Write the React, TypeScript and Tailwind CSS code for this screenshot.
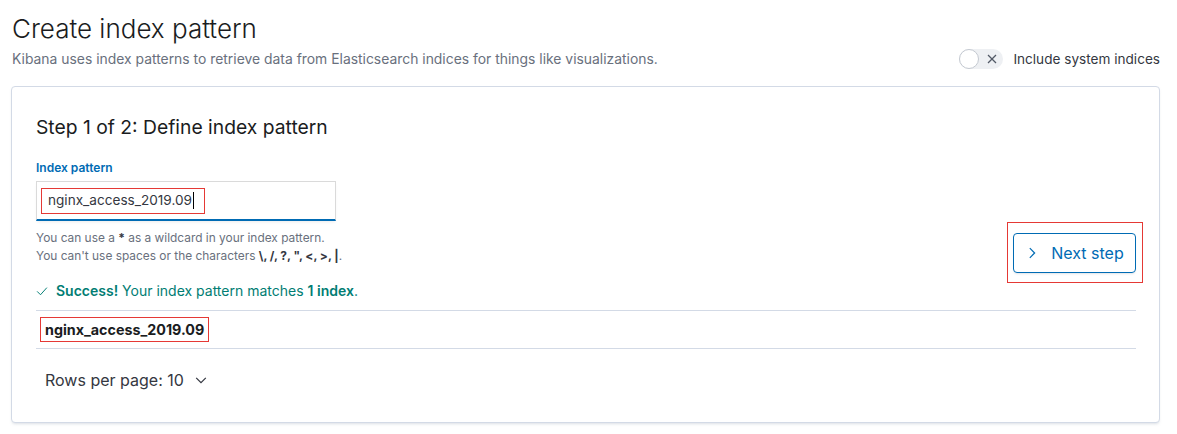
import React from 'react';

const font = { fontFamily: 'Inter, "Noto Sans", sans-serif' };

const CheckIcon = () => (
  <svg width="12" height="12" viewBox="0 0 16 16" fill="none" stroke="currentColor" strokeWidth="1.3">
    <polyline points="1.5,8.5 6,13 14.5,3.5" />
  </svg>
);

const ChevronRight = () => (
  <svg width="14" height="14" viewBox="0 0 16 16" fill="none" stroke="currentColor" strokeWidth="1.4">
    <polyline points="5.5,2.5 11,8 5.5,13.5" />
  </svg>
);

const ChevronDown = () => (
  <svg width="14" height="14" viewBox="0 0 16 16" fill="none" stroke="currentColor" strokeWidth="1.4">
    <polyline points="2.5,5.5 8,11 13.5,5.5" />
  </svg>
);

const App: React.FC = () => {
  return (
    <div style={font} className="bg-white w-[1177px] h-[434px] pl-[11px] pr-[17px] pt-[12px] text-[#343741]">
      {/* page header */}
      <div className="flex items-end justify-between">
        <div className="pl-[1px]">
          <h1 className="text-[26px] leading-[34px] font-light text-[#1a1c21]">Create index pattern</h1>
          <p className="mt-[3px] text-[13.9px] leading-[20px] text-[#69707d]">
            Kibana uses index patterns to retrieve data from Elasticsearch indices for things like visualizations.
          </p>
        </div>
        <div className="flex items-center">
          <div className="relative w-[44px] h-[20px] rounded-full bg-[#eef0f3] flex items-center">
            <div className="absolute left-0 top-0 w-[20px] h-[20px] rounded-full bg-white border border-[#c4c9d1]" />
            <svg className="absolute left-[27px] top-[4px]" width="12" height="12" viewBox="0 0 12 12" stroke="#535966" strokeWidth="1.3">
              <line x1="2" y1="2" x2="10" y2="10" />
              <line x1="10" y1="2" x2="2" y2="10" />
            </svg>
          </div>
          <span className="ml-[10px] text-[13.6px] leading-[20px] text-[#343741]">Include system indices</span>
        </div>
      </div>

      {/* panel */}
      <div className="mt-[17px] border border-[#d3dae6] rounded-[4px] bg-white shadow-[0_2px_3px_-1px_rgba(152,162,179,0.35)] pl-[24px] pr-[23px] pt-[28px] pb-[26px]">
        <h2 className="text-[19.3px] leading-[24px] font-normal text-[#1a1c21]">Step 1 of 2: Define index pattern</h2>

        <div className="mt-[21px] flex justify-between">
          <div>
            <label className="block text-[12px] leading-[16px] font-semibold text-[#006bb4]">Index pattern</label>
            <div className="mt-[5px] w-[300px] h-[40px] bg-white border border-[#dadada] border-b-2 border-b-[#006bb4] flex items-center pl-[4px] shadow-[0_2px_3px_-1px_rgba(0,0,0,0.08)]">
              <span className="inline-flex items-center h-[26px] border border-[#e53935] pl-[6px] pr-[10px] text-[13.6px] text-[#343741]">
                nginx_access_2019.09
                <span className="inline-block w-px h-[17px] bg-black ml-px" />
              </span>
            </div>
            <div className="mt-[8px] text-[11.9px] leading-[18px] text-[#69707d]">
              <p>
                You can use a <strong className="text-[#343741]">*</strong> as a wildcard in your index pattern.
              </p>
              <p>
                You can't use spaces or the characters <strong className="text-[#343741]">\, /, ?, ", &lt;, &gt;, |</strong>.
              </p>
            </div>
          </div>
          <div className="mt-[62px] -mr-[7px] h-[61px] border border-[#e53935] pl-[5px] pr-[6px] pt-[10px]">
            <button className="h-[40px] w-[123px] rounded-[4px] border border-[#006bb4] text-[#006bb4] flex items-center justify-center gap-[12px] text-[16px] shadow-[0_2px_2px_-1px_rgba(152,162,179,0.3)]">
              <ChevronRight />
              <span>Next step</span>
            </button>
          </div>
        </div>

        <div className="mt-[-2px] flex items-center gap-[8px] text-[14px] leading-[20px] text-[#017d73]">
          <CheckIcon />
          <span>
            <strong className="font-semibold">Success!</strong> Your index pattern matches <strong className="font-semibold">1 index</strong>.
          </span>
        </div>

        <div className="mt-[9px] border-t border-b border-[#d3dae6] h-[39px] flex items-center pl-[4px]">
          <span className="h-[25px] flex items-center border border-[#e53935] px-[4px] text-[14.3px] font-bold text-[#1a1c21]">
            nginx_access_2019.09
          </span>
        </div>

        <div className="mt-[15px] h-[32px] flex items-center pl-[9px] gap-[10px] text-[16px] text-[#343741]">
          <span>Rows per page: 10</span>
          <ChevronDown />
        </div>
      </div>
    </div>
  );
};

export default App;
